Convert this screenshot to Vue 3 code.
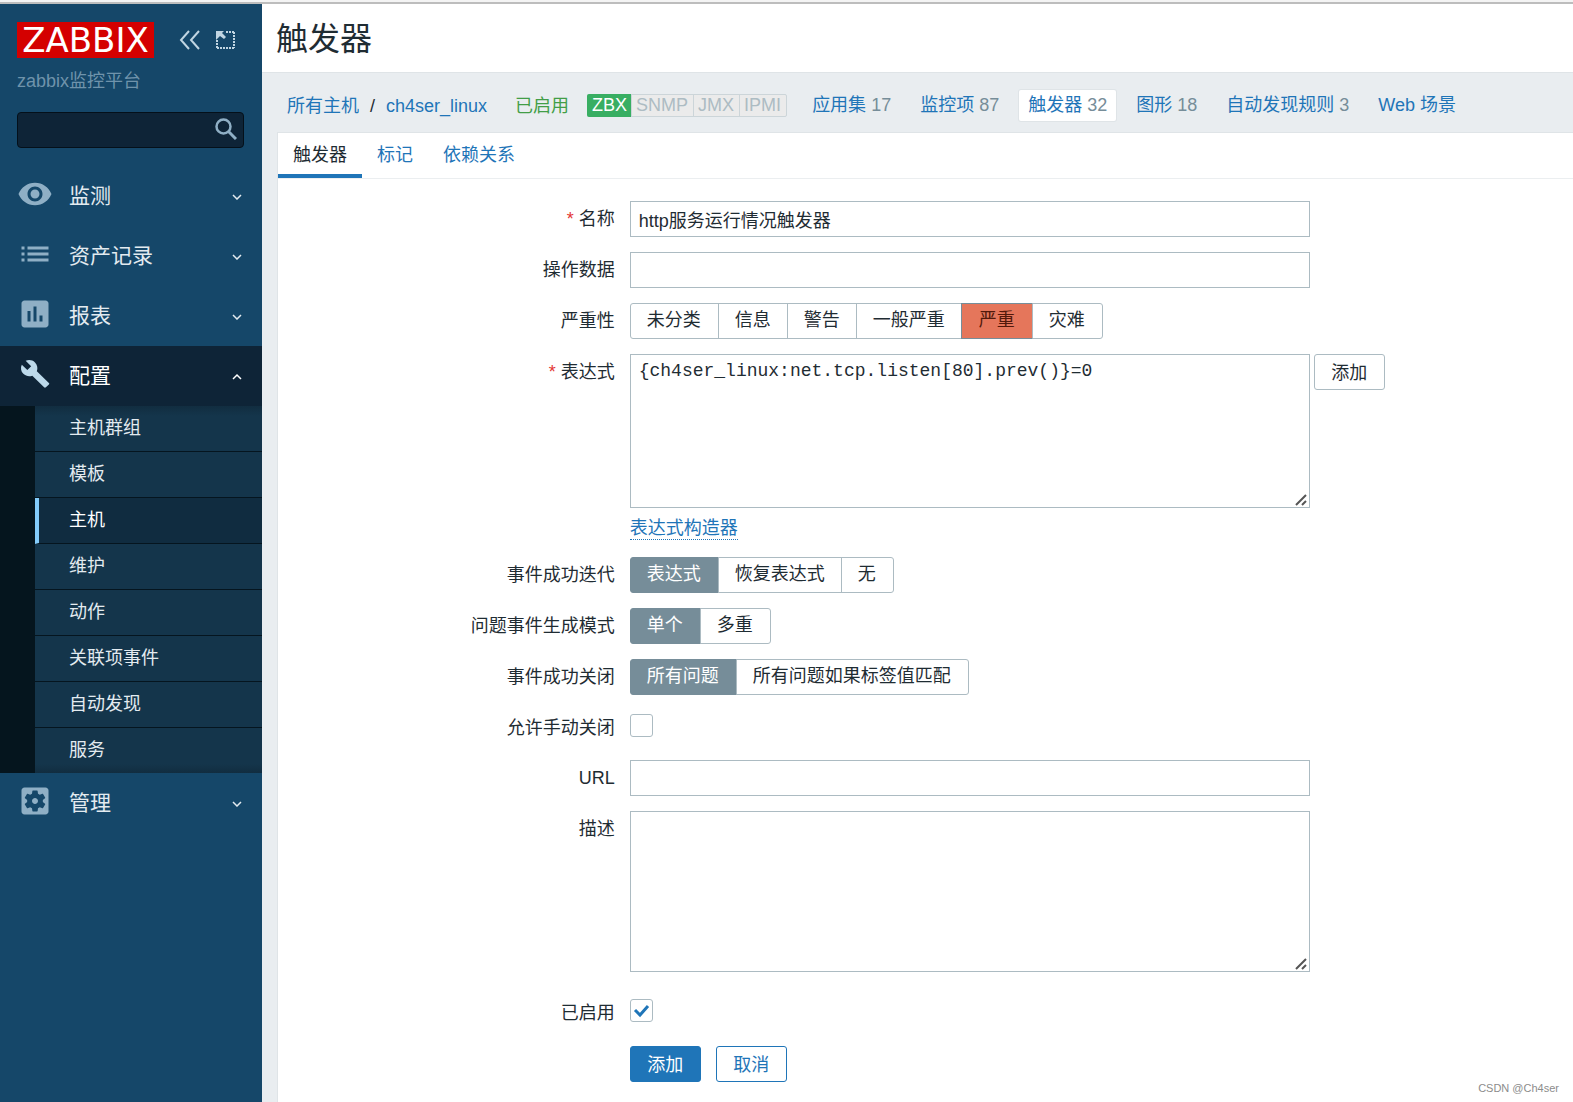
<script setup>
import { ref } from 'vue'

const icons = {
  eye: 'M12 4.5C7 4.5 2.73 7.61 1 12c1.73 4.39 6 7.5 11 7.5s9.27-3.11 11-7.5c-1.73-4.39-6-7.5-11-7.5zM12 17c-2.76 0-5-2.24-5-5s2.240-5 5-5 5 2.240 5 5-2.240 5-5 5zm0-8c-1.660 0-3 1.340-3 3s1.340 3 3 3 3-1.340 3-3-1.340-3-3-3z',
  list: 'M3 13h2v-2H3v2zm0 4h2v-2H3v2zm0-8h2V7H3v2zm4 4h14v-2H7v2zm0 4h14v-2H7v2zM7 7v2h14V7H7z',
  chart: 'M19 3H5c-1.100 0-2 .9-2 2v14c0 1.100.9 2 2 2h14c1.100 0 2-.9 2-2V5c0-1.100-.9-2-2-2zM9 17H7v-7h2v7zm4 0h-2V7h2v10zm4 0h-2v-4h2v4z',
  wrench: 'M20.7 18.100l-8.300-8.200c.8-2.100.4-4.500-1.300-6.200C9.300 1.900 6.600 1.600 4.500 2.600l3.900 3.800-2.700 2.700-3.900-3.800C.7 7.400 1.200 10.100 2.900 11.800c1.700 1.700 4.200 2.100 6.300 1.300l8.300 8.200c.4.4.9.4 1.300 0l2.100-2c.4-.3.4-.9-.2-1.200z',
  gear: 'M12 10c-1.100 0-2 .9-2 2s.9 2 2 2 2-.9 2-2-.9-2-2-2zm7-7H5c-1.110 0-2 .9-2 2v14c0 1.100.89 2 2 2h14c1.110 0 2-.9 2-2V5c0-1.100-.89-2-2-2zm-1.750 9c0 .23-.02.46-.05.68l1.480 1.160c.13.11.17.3.080.45l-1.400 2.420c-.09.15-.27.21-.43.150l-1.740-.7c-.36.280-.76.510-1.180.690l-.26 1.850c-.03.170-.18.300-.35.300h-2.800c-.17 0-.32-.13-.35-.29l-.26-1.850c-.43-.18-.82-.41-1.180-.690l-1.740.7c-.16.060-.34 0-.43-.150l-1.400-2.420c-.09-.15-.05-.34.080-.45l1.480-1.160c-.03-.23-.05-.46-.05-.690s.020-.46.050-.68l-1.480-1.160c-.13-.11-.17-.3-.080-.45l1.400-2.420c.09-.15.27-.21.43-.150l1.740.7c.36-.28.76-.51 1.180-.690l.26-1.850c.03-.17.18-.3.350-.3h2.800c.17 0 .32.130.35.290l.26 1.850c.43.180.82.410 1.180.690l1.740-.7c.16-.06.34 0 .43.150l1.400 2.420c.09.150.05.340-.080.450l-1.480 1.160c.03.230.05.460.05.690z',
}

const menu = [
  { label: '监测', icon: 'eye' },
  { label: '资产记录', icon: 'list' },
  { label: '报表', icon: 'chart' },
  {
    label: '配置',
    icon: 'wrench',
    viewBox: '-1.6 -0.8 25.4 25.4',
    open: true,
    items: ['主机群组', '模板', '主机', '维护', '动作', '关联项事件', '自动发现', '服务'],
  },
  { label: '管理', icon: 'gear' },
]
const currentPage = '主机'

const sections = [
  { label: '应用集', count: 17 },
  { label: '监控项', count: 87 },
  { label: '触发器', count: 32, active: true },
  { label: '图形', count: 18 },
  { label: '自动发现规则', count: 3 },
  { label: 'Web 场景' },
]
const tabs = ['触发器', '标记', '依赖关系']

const severities = ['未分类', '信息', '警告', '一般严重', '严重', '灾难']
const modes = [
  { key: 'recovery', label: '事件成功迭代', options: ['表达式', '恢复表达式', '无'] },
  { key: 'multiple', label: '问题事件生成模式', options: ['单个', '多重'] },
  { key: 'correlation', label: '事件成功关闭', options: ['所有问题', '所有问题如果标签值匹配'] },
]

const name = ref('http服务运行情况触发器')
const opdata = ref('')
const severity = ref('严重')
const expression = ref('{ch4ser_linux:net.tcp.listen[80].prev()}=0')
const chosen = ref({ recovery: '表达式', multiple: '单个', correlation: '所有问题' })
const manualClose = ref(false)
const url = ref('')
const description = ref('')
const enabled = ref(true)
</script>

<template>
  <div class="page">
    <aside class="sidebar">
      <div class="brand">
        <a href="#" class="logo">ZABBIX</a>
        <button type="button" class="icon-button" aria-label="收起侧边栏">
          <svg width="22" height="20" viewBox="0 0 22 20" fill="none" stroke="currentColor" stroke-width="2">
            <path d="M10 1L2 10l8 9M20 1l-8 9 8 9" />
          </svg>
        </button>
        <button type="button" class="icon-button" aria-label="隐藏侧边栏">
          <svg width="20" height="20" viewBox="0 0 20 20">
            <path d="M10 2h8M18 2v16M18 18H0M1 18V10" fill="none" stroke="currentColor" stroke-width="2" stroke-dasharray="2 1" />
            <path d="M0 1h8L6 3l4 4-2 2-4-3-4 4z" fill="currentColor" />
          </svg>
        </button>
      </div>
      <p class="server">zabbix监控平台</p>
      <form class="search" role="search" @submit.prevent>
        <input type="text" aria-label="搜索" />
        <button type="submit" aria-label="搜索">
          <svg width="22" height="22" viewBox="0 0 22 22" fill="none" stroke="currentColor">
            <circle cx="8.500" cy="8.500" r="7" stroke-width="2.500" />
            <path d="M13.500 13.500l7.500 7.500" stroke-width="3" />
          </svg>
        </button>
      </form>

      <nav class="menu">
        <div v-for="entry in menu" :key="entry.label" :class="{ open: entry.open }">
          <a href="#" class="menu-head">
            <svg class="menu-icon" :viewBox="entry.viewBox || '0 0 24 24'"><path :d="icons[entry.icon]" fill="currentColor" /></svg>
            <span>{{ entry.label }}</span>
            <svg class="chevron" width="10" height="8" viewBox="0 0 10 8" fill="none" stroke="currentColor" stroke-width="1.500">
              <path :d="entry.open ? 'M1 7l4-4 4 4' : 'M1 3l4 4 4-4'" />
            </svg>
          </a>
          <ul v-if="entry.items" class="submenu">
            <li v-for="item in entry.items" :key="item">
              <a href="#" :class="{ current: item === currentPage }">{{ item }}</a>
            </li>
          </ul>
        </div>
      </nav>
    </aside>

    <main class="main">
      <header class="title"><h1>触发器</h1></header>

      <nav class="host-nav">
        <div class="crumbs">
          <a href="#">所有主机</a>
          <span class="slash">/</span>
          <a href="#">ch4ser_linux</a>
        </div>
        <span class="status">已启用</span>
        <div class="interfaces">
          <span class="on">ZBX</span><span>SNMP</span><span>JMX</span><span>IPMI</span>
        </div>
        <div class="sections">
          <a v-for="s in sections" :key="s.label" href="#" :class="{ active: s.active }">{{ s.label }}<span v-if="s.count" class="count">{{ s.count }}</span></a>
        </div>
      </nav>

      <section class="panel">
        <nav class="tabs">
          <a v-for="(t, i) in tabs" :key="t" href="#" :class="{ active: i === 0 }">{{ t }}</a>
        </nav>

        <form class="form" @submit.prevent>
          <label class="label required" for="name">名称</label>
          <div class="field"><input id="name" v-model="name" type="text" class="text" /></div>

          <label class="label" for="opdata">操作数据</label>
          <div class="field"><input id="opdata" v-model="opdata" type="text" class="text" /></div>

          <span id="severity-label" class="label">严重性</span>
          <div class="field">
            <div class="segments severity" role="radiogroup" aria-labelledby="severity-label">
              <label v-for="s in severities" :key="s">
                <input v-model="severity" type="radio" name="severity" :value="s" /><span>{{ s }}</span>
              </label>
            </div>
          </div>

          <label class="label required" for="expression">表达式</label>
          <div class="field">
            <div class="expression">
              <textarea id="expression" v-model="expression" class="text code" spellcheck="false"></textarea>
              <button type="button" class="button plain">添加</button>
            </div>
            <a href="#" class="dotted">表达式构造器</a>
          </div>

          <template v-for="m in modes" :key="m.key">
            <span :id="m.key + '-label'" class="label">{{ m.label }}</span>
            <div class="field">
              <div class="segments" role="radiogroup" :aria-labelledby="m.key + '-label'">
                <label v-for="o in m.options" :key="o">
                  <input v-model="chosen[m.key]" type="radio" :name="m.key" :value="o" /><span>{{ o }}</span>
                </label>
              </div>
            </div>
          </template>

          <label class="label" for="manual">允许手动关闭</label>
          <div class="field check"><input id="manual" v-model="manualClose" type="checkbox" /></div>

          <label class="label" for="url">URL</label>
          <div class="field"><input id="url" v-model="url" type="text" class="text" /></div>

          <label class="label" for="description">描述</label>
          <div class="field"><textarea id="description" v-model="description" class="text tall"></textarea></div>

          <label class="label last" for="enabled">已启用</label>
          <div class="field check last"><input id="enabled" v-model="enabled" type="checkbox" /></div>

          <div class="actions">
            <button type="submit" class="button primary">添加</button>
            <button type="button" class="button outline">取消</button>
          </div>
        </form>
      </section>
    </main>
    <small class="watermark">CSDN @Ch4ser</small>
  </div>
</template>

<style>
body {
  margin: 0;
  background: #fff;
}
</style>

<style scoped>
.page,
.page * {
  box-sizing: border-box;
}
.page {
  position: relative;
  display: flex;
  min-height: 100vh;
  border-top: 4px solid #bdbdbd;
  font: 18px/24px "Liberation Sans", "Noto Sans CJK SC", sans-serif;
  color: #1f2c33;
}
.page::before {
  content: "";
  position: absolute;
  inset: -4px 0 auto;
  height: 2px;
  background: #f4f4f4;
}
a {
  color: #1f75b8;
  text-decoration: none;
}
button,
input,
textarea {
  font: inherit;
  color: inherit;
  margin: 0;
}
button {
  cursor: pointer;
}

.sidebar {
  flex: 0 0 262px;
  min-width: 0;
  background: #154769;
}
.brand {
  display: flex;
  align-items: center;
  padding: 18px 17px 0;
}
.logo {
  width: 137px;
  height: 36px;
  margin-right: 18px;
  background: #d40000;
  color: #fff;
  font: 34px/37px "DejaVu Sans", sans-serif;
  text-align: center;
}
.icon-button {
  display: flex;
  justify-content: center;
  width: 36px;
  padding: 0;
  border: 0;
  background: none;
  color: #c0d5e2;
}
.server {
  margin: 11px 17px 19px;
  color: #6f93ab;
}
.search {
  display: flex;
  height: 36px;
  margin: 0 18px 18px 17px;
  background: #0e2437;
  border: 1px solid #04101a;
  border-radius: 4px;
}
.search input {
  flex: 1;
  min-width: 0;
  padding: 0 8px;
  border: 0;
  background: none;
  color: #fff;
}
.search button {
  display: flex;
  align-items: center;
  padding: 0 6px 2px;
  border: 0;
  background: none;
  color: #8fafc5;
}
.menu-head {
  display: flex;
  align-items: center;
  height: 60px;
  padding: 0 20px 0 17px;
  font-size: 21px;
  color: #e3ebf0;
}
.menu-icon {
  width: 36px;
  height: 36px;
  margin: 0 16px 4px 0;
  color: #8fafc5;
}
.chevron {
  margin-left: auto;
}
.open .menu-head {
  background: #0e2437;
  color: #fff;
}
.open .menu-icon {
  color: #bcd9ea;
}
.submenu {
  margin: 0;
  padding: 0 0 0 35px;
  list-style: none;
  background: #05151e;
}
.submenu a {
  display: block;
  height: 46px;
  padding-left: 34px;
  line-height: 45px;
  background: #14354b;
  border-bottom: 1px solid #05151f;
  color: #e3ebf0;
}
.submenu li:first-child a {
  background: linear-gradient(#112d40, #14354b 10px);
}
.submenu li:last-child a {
  height: 45px;
  border-bottom: 0;
  background: linear-gradient(#14354b 36px, #112d40);
}
.submenu a.current {
  padding-left: 30px;
  background: #102c40;
  border-left: 4px solid #83cbfa;
  color: #fff;
}

.main {
  flex: 1;
  min-width: 0;
  display: flex;
  flex-direction: column;
  background: #e9edf0;
}
.title {
  padding: 13px 14px 11px;
  background: #fff;
  border-bottom: 1px solid #dfe4e7;
}
h1 {
  margin: 0;
  font-size: 32px;
  line-height: 44px;
  font-weight: 400;
}
.host-nav {
  display: flex;
  align-items: center;
  height: 59px;
  padding: 6px 0 0 25px;
  white-space: nowrap;
}
.crumbs {
  display: flex;
  gap: 11px;
}
.status {
  margin: 0 18px 0 28px;
  color: #429e47;
}
.interfaces {
  display: flex;
  border: 1px solid #ccd5d9;
  border-radius: 2px;
  line-height: 21px;
  color: #adbcc3;
  background: #ebebeb;
}
.interfaces span {
  padding: 0 5px 0 4px;
  border-left: 1px solid #ccd5d9;
}
.interfaces .on {
  margin: -1px 0 -1px -1px;
  padding: 1px 4px 1px 5px;
  border: 0;
  border-radius: 2px 0 0 2px;
  background: #38ae62;
  color: #fff;
}
.sections {
  display: flex;
  gap: 11px;
  margin-left: 16px;
}
.sections a {
  padding: 3px 9px 4px;
  border-radius: 2px;
}
.sections .active {
  background: #fff;
  box-shadow: 0 0 0 1px #dfe4e7;
}
.count {
  margin-left: 5px;
  color: #768d99;
}

.panel {
  flex: 1;
  margin-left: 15px;
  background: #fff;
  border: 1px solid #dfe4e7;
  border-width: 1px 0 0 1px;
}
.tabs {
  display: flex;
  border-bottom: 1px solid #ebeef0;
}
.tabs a {
  padding: 10px 15px 7px;
  border-bottom: 4px solid transparent;
}
.tabs .active {
  color: #1f2c33;
  border-color: #1f75b8;
}

.form {
  display: grid;
  grid-template-columns: 26% minmax(0, 1fr);
  gap: 15px;
  padding: 22px 0 20px;
}
.label {
  padding-top: 6px;
  text-align: right;
}
.required::before {
  content: "* ";
  color: #e33734;
}
.text {
  display: block;
  width: 100%;
  max-width: 680px;
  height: 36px;
  padding: 0 8px;
  background: #fff;
  border: 1px solid #acbbc2;
  border-radius: 0;
}
textarea.text {
  padding: 5px 8px;
}
textarea::-webkit-resizer {
  background: url("data:image/svg+xml,%3Csvg xmlns='http://www.w3.org/2000/svg' viewBox='0 0 15 15'%3E%3Cpath d='M2 13L12 3M8 13l4-4' fill='none' stroke='%23555' stroke-width='2'/%3E%3C/svg%3E") no-repeat;
}
textarea.code {
  height: 154px;
  font-family: "Liberation Mono", monospace;
  line-height: 23px;
}
textarea.tall {
  height: 161px;
}
.expression {
  display: flex;
  gap: 4px;
}
.dotted {
  display: inline-block;
  margin: 9px 0 2px;
  line-height: 22px;
  border-bottom: 1px dotted #1f75b8;
}
.segments {
  display: flex;
}
.segments label {
  position: relative;
}
.segments label + label {
  margin-left: -1px;
}
.segments input {
  position: absolute;
  inset: 0;
  opacity: 0;
}
.segments span {
  display: block;
  height: 36px;
  padding: 0 16px;
  line-height: 33px;
  border: 1px solid #acbbc2;
}
.segments label:first-child span {
  padding-right: 17px;
  border-radius: 3px 0 0 3px;
}
.segments label:last-child span {
  padding-right: 17px;
  border-radius: 0 3px 3px 0;
}
.segments input:checked + span {
  position: relative;
  background: #768d99;
  border-color: #768d99;
  color: #fff;
}
.severity input:checked + span {
  padding: 0 17px;
  background: #e5765b;
  color: #52190b;
}
.check {
  height: 35px;
  padding-top: 4px;
}
.check input {
  display: block;
  appearance: none;
  width: 23px;
  height: 23px;
  background: #fff center / 17px no-repeat;
  border: 1px solid #acbbc2;
  border-radius: 3px;
}
.check input:checked {
  background-image: url("data:image/svg+xml,%3Csvg xmlns='http://www.w3.org/2000/svg' viewBox='0 0 17 17'%3E%3Cpath d='M2 8l5 5 8-9' fill='none' stroke='%231f75b8' stroke-width='3'/%3E%3C/svg%3E");
}
.last {
  margin-top: 8px;
}
.actions {
  grid-column: 2;
  display: flex;
  gap: 15px;
  margin-top: 1px;
}
.button {
  flex: none;
  align-self: flex-start;
  min-width: 71px;
  height: 36px;
  padding: 1px 16px 0;
  line-height: 34px;
  border: 1px solid #1f75b8;
  border-radius: 3px;
  background: #fff;
  color: #1f75b8;
}
.plain {
  border-color: #acbbc2;
  color: #1f2c33;
}
.primary {
  background: #1f75b8;
  color: #fff;
}
.watermark {
  position: absolute;
  right: 14px;
  bottom: 6px;
  font-size: 11px;
  line-height: 16px;
  color: #8c8c8c;
}
</style>
